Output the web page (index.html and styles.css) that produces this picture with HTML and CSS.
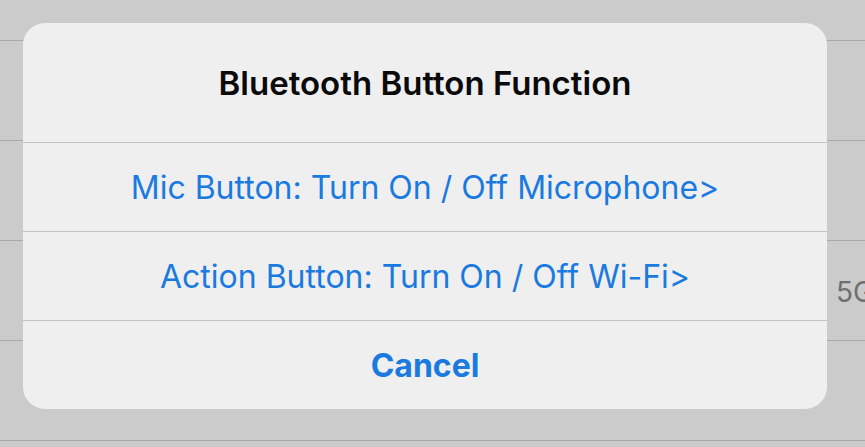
FILE: index.html
```html
<!DOCTYPE html>
<html lang="en">
<head>
    <meta charset="UTF-8">
    <meta name="viewport" content="width=device-width, initial-scale=1.0">
    <title>Bluetooth Button Function</title>
    <link rel="stylesheet" href="styles.css">
</head>
<body>
    <div class="list">
        <div class="list-row first"></div>
        <div class="list-row"></div>
        <div class="list-row"></div>
        <div class="list-row"><span class="row-detail">5G</span></div>
        <div class="list-row"></div>
    </div>

    <div class="sheet">
        <div class="sheet-title">Bluetooth Button Function</div>
        <div class="sheet-action">Mic Button: Turn On / Off Microphone&gt;</div>
        <div class="sheet-action">Action Button: Turn On / Off Wi-Fi&gt;</div>
        <div class="sheet-action cancel">Cancel</div>
    </div>
</body>
</html>
```

FILE: styles.css
```css
body {
    margin: 0;
    height: 447px;
    overflow: hidden;
    background-color: #cbcbcb;
    font-family: Inter, "Noto Sans", sans-serif;
    position: relative;
}
.list {
    display: flex;
    flex-direction: column;
}
.list-row {
    height: 99px;
    border-bottom: 1px solid #a8a8a8;
    display: flex;
    justify-content: flex-end;
    align-items: center;
    overflow: hidden;
}
.list-row.first {
    height: 40px;
}
.row-detail {
    font-size: 28px;
    color: #6f6f6f;
    width: 29px;
    white-space: nowrap;
    padding-top: 2px;
}
.sheet {
    position: absolute;
    top: 23px;
    left: 23px;
    width: 804px;
    height: 386px;
    background-color: #efefef;
    border-radius: 22px;
    display: flex;
    flex-direction: column;
    overflow: hidden;
}
.sheet-title {
    height: 119px;
    display: flex;
    justify-content: center;
    align-items: center;
    font-size: 33px;
    font-weight: 600;
    color: #0a0a0a;
    border-bottom: 1px solid #c2c2c2;
}
.sheet-action {
    height: 88px;
    display: flex;
    justify-content: center;
    align-items: center;
    font-size: 32px;
    color: #1a7ae0;
    border-bottom: 1px solid #c2c2c2;
}
.sheet-action.cancel {
    flex: 1;
    font-weight: 700;
    border-bottom: none;
}
```
